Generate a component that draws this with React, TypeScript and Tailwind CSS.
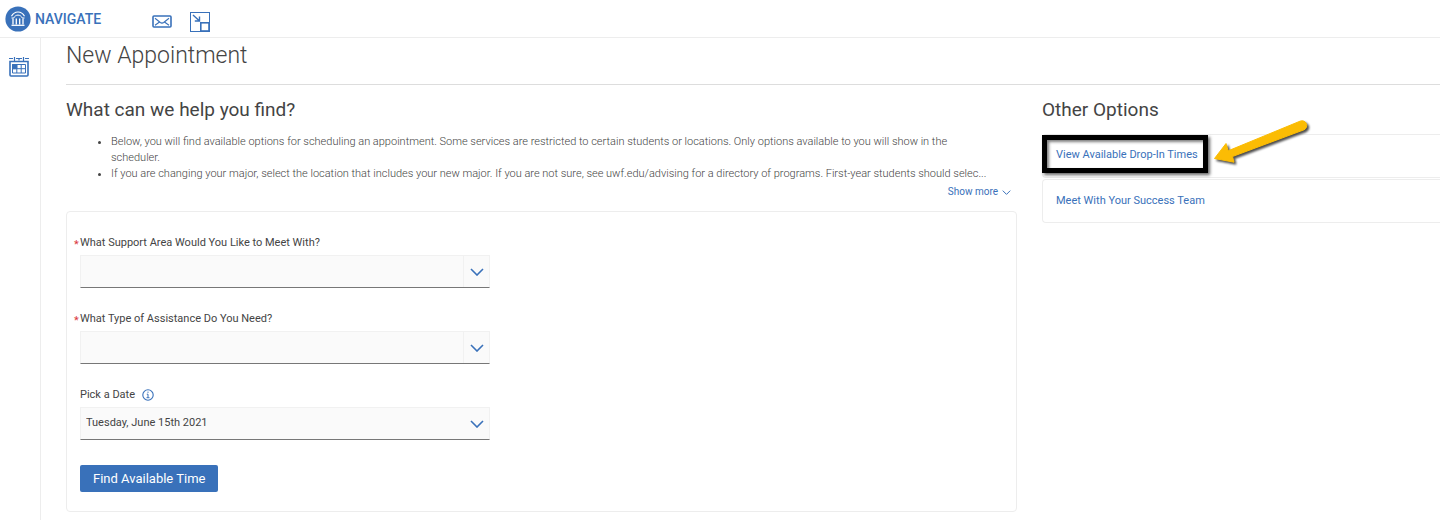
import type { ReactNode } from 'react';

const bullets = [
  'Below, you will find available options for scheduling an appointment. Some services are restricted to certain students or locations. Only options available to you will show in the scheduler.',
  'If you are changing your major, select the location that includes your new major. If you are not sure, see uwf.edu/advising for a directory of programs. First-year students should selec...',
];

const ChevronDown = ({ className }: { className: string }) => (
  <svg viewBox="0 0 14 8" fill="none" stroke="currentColor" strokeWidth="1.6" className={className} aria-hidden="true">
    <path d="M1 1l6 6 6-6" />
  </svg>
);

const LogoIcon = () => (
  <svg viewBox="0 0 26 26" className="w-[26px] h-[26px]" aria-hidden="true">
    <circle cx="13" cy="13" r="12.6" fill="#3971ba" />
    <g fill="none" stroke="#fff">
      <path d="M6.5 10.2C8 7.4 10.3 6 13 6s5 1.4 6.5 4.2" strokeWidth="1.2" />
      <path d="M6.5 12h2.2c1-2 2.5-2.9 4.3-2.9s3.3.9 4.3 2.9h2.2" />
      <path d="M8 12.5v6M11.3 12.5v6M14.7 12.5v6M18 12.5v6" strokeWidth="1.3" />
      <path d="M6.5 19.3h13" strokeWidth="1.3" />
    </g>
  </svg>
);

const MailIcon = () => (
  <svg viewBox="0 0 20 13" fill="none" stroke="#3971ba" className="w-5 h-[13px]" aria-hidden="true">
    <rect x="1" y="1" width="18" height="11" rx="1" strokeWidth="1.6" />
    <path d="M3 3.2l5.3 4.3q1.7 1.2 3.4 0L17 3.2M3 10.3l4.2-3M17 10.3l-4.2-3" strokeWidth="1.1" />
  </svg>
);

const ShrinkIcon = () => (
  <svg viewBox="0 0 20 20" fill="none" stroke="#3971ba" className="w-5 h-5" aria-hidden="true">
    <rect x="0.5" y="0.5" width="19" height="19" />
    <rect x="10.8" y="10.8" width="8.2" height="8.2" fill="#fff" strokeWidth="1.6" />
    <path d="M3 3l6 5.5M9.5 4.5V9H4.8" strokeWidth="1.4" />
  </svg>
);

const CalendarIcon = () => (
  <svg viewBox="0 0 20 20" fill="none" stroke="#3971ba" className="w-5 h-5" aria-hidden="true">
    <path d="M0 1.5h4M7 1.5h6M16 1.5h4" />
    <path d="M5.5 0v5M14.500 0v5M10 1.5v2" strokeWidth="1.2" />
    <path d="M1 4.500V18q0 1 1 1h16q1 0 1-1V4.500z" strokeWidth="1.6" />
    <path d="M3.500 7.500h13V16h-13zM3.500 11.700h13M7.800 7.500V16M12.200 7.500V16" />
    <path d="M3.500 7.500h4.300v4.200H3.500z" fill="#3971ba" />
  </svg>
);

const InfoIcon = () => (
  <svg viewBox="0 0 12 12" fill="none" stroke="#3971ba" className="w-3 h-3" aria-hidden="true">
    <circle cx="6" cy="6" r="5.2" strokeWidth="1.1" />
    <path d="M4.8 5.2H6v3.300M4.500 8.700h3M5.400 3.200h1.200" />
  </svg>
);

const ArrowMarker = () => (
  <svg viewBox="0 0 100 50" className="absolute left-[166px] -top-4 w-[100px] h-[50px] pointer-events-none overflow-visible" aria-hidden="true">
    <path
      d="M5.500 39.500L17 24.500l2.200 7.300L91 2.200a4.600 4.600 0 0 1 4 8.600L23.500 37.500 25 43.200z"
      fill="#fbbc04"
      stroke="#fbbc04"
      strokeLinejoin="round"
      className="drop-shadow-[2px_2px_1px_rgba(0,0,0,0.7)]"
    />
  </svg>
);

type FieldProps = {
  id: string;
  label: string;
  required?: boolean;
  divided?: boolean;
  value?: string;
  extra?: ReactNode;
};

const Field = ({ id, label, required, divided, value = '', extra }: FieldProps) => (
  <div className="flex flex-col gap-1">
    <div className="flex items-center gap-[7px]">
      <label htmlFor={id} className="relative leading-4">
        {required && <span className="absolute -left-1.5 top-0.5 text-[#d9363e]">*</span>}
        {label}
      </label>
      {extra}
    </div>
    <div className="relative max-w-[410px]">
      <select
        id={id}
        required={required}
        className="w-full h-[33px] pl-[5px] pr-8 appearance-none bg-[#fafafa] border border-[#f1f1f1] border-b-[#777] outline-none"
      >
        <option>{value}</option>
      </select>
      <span
        className={`absolute right-0 inset-y-px w-[27px] flex items-center justify-center text-[#3971ba] pointer-events-none ${divided ? 'border-l border-[#f1f1f1]' : ''}`}
      >
        <ChevronDown className="w-3.5 h-2" />
      </span>
    </div>
  </div>
);

const App = () => {
  return (
    <div className="min-h-screen flex flex-col bg-white font-['Roboto',sans-serif] text-[11px] text-[#444]">
      {/* Top bar */}
      <header className="h-[38px] shrink-0 flex items-center border-b border-[#ededed] pl-[5px]">
        <a href="#" className="flex items-center gap-1 text-[#3971ba] text-sm font-medium">
          <LogoIcon />
          NAVIGATE
        </a>
        <nav className="flex items-center gap-[18px] ml-[51px] pt-1.5">
          <button aria-label="Messages">
            <MailIcon />
          </button>
          <button aria-label="Collapse">
            <ShrinkIcon />
          </button>
        </nav>
      </header>

      <div className="flex flex-1">
        {/* Sidebar */}
        <nav className="w-[41px] shrink-0 border-r border-[#ededed] pt-[19px] pl-[9px]">
          <a href="#" aria-label="Appointments" className="block">
            <CalendarIcon />
          </a>
        </nav>

        <main className="flex-1 min-w-0 pl-[25px]">
          <h1 className="text-[23px] leading-8 font-light pt-0.5 pb-3 border-b border-[#ddd]">New Appointment</h1>

          <div className="flex gap-[25px] pt-3">
            <section className="flex-1 min-w-0">
              <h2 className="text-[19px] leading-[26px]">What can we help you find?</h2>
              <ul className="list-disc mt-[11px] pl-[45px] pr-5 leading-4 font-light">
                {bullets.map((text) => (
                  <li key={text}>{text}</li>
                ))}
              </ul>
              <div className="flex justify-end pr-1.5">
                <button className="flex items-center gap-1 text-[10px] leading-5 text-[#3971ba]">
                  Show more
                  <ChevronDown className="w-[9px] h-[5px]" />
                </button>
              </div>

              {/* Search form */}
              <form className="mt-[9px] flex flex-col gap-[23px] border border-[#ededed] rounded px-[13px] pt-[23px] pb-[19px]">
                <Field id="support-area" label="What Support Area Would You Like to Meet With?" required divided />
                <Field id="assistance" label="What Type of Assistance Do You Need?" required divided />
                <Field
                  id="date"
                  label="Pick a Date"
                  value="Tuesday, June 15th 2021"
                  extra={
                    <button type="button" aria-label="About dates">
                      <InfoIcon />
                    </button>
                  }
                />
                <button type="button" className="self-start h-[27px] px-[13px] mt-0.5 rounded-xs bg-[#3971ba] text-white text-[13px]">
                  Find Available Time
                </button>
              </form>
            </section>

            <aside className="w-[398px] shrink-0">
              <h2 className="text-[19px] leading-[26px]">Other Options</h2>
              <ul className="mt-[11px] flex flex-col gap-px text-[#3971ba]">
                <li className="relative h-11 border border-r-0 border-[#ededed] rounded-l">
                  <a
                    href="#"
                    className="-ml-px flex w-fit items-center h-[38px] pt-0.5 pl-[9px] pr-[5px] border-5 border-black shadow-[2px_2px_3px_rgba(0,0,0,0.6),inset_2px_2px_3px_rgba(0,0,0,0.5)]"
                  >
                    View Available Drop-In Times
                  </a>
                  <ArrowMarker />
                </li>
                <li className="h-11 flex items-center px-[13px] border border-r-0 border-[#ededed] rounded-l">
                  <a href="#">Meet With Your Success Team</a>
                </li>
              </ul>
            </aside>
          </div>
        </main>
      </div>
    </div>
  );
};

export default App;
